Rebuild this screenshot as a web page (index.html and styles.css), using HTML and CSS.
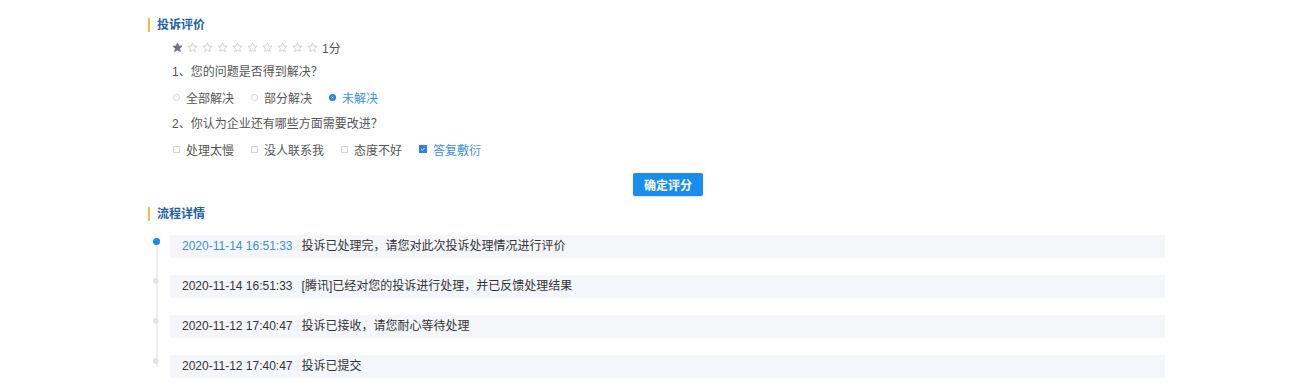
FILE: index.html
```html
<!DOCTYPE html>
<html lang="zh">
<head>
<meta charset="utf-8">
<title>投诉评价</title>
<link rel="stylesheet" href="styles.css">
</head>
<body>
<div class="wrap">
  <div class="sec-title">投诉评价</div>
  <div class="rate">
    <div class="stars">
      <svg class="star on" viewBox="0 0 24 24"><path d="M12 2l2.9 6.6 7.1.6-5.4 4.7 1.6 7-6.2-3.7-6.2 3.7 1.6-7L2 9.2l7.1-.6z"/></svg>
      <svg class="star" viewBox="0 0 24 24"><path d="M12 2l2.9 6.6 7.1.6-5.4 4.7 1.6 7-6.2-3.7-6.2 3.7 1.6-7L2 9.2l7.1-.6z"/></svg>
      <svg class="star" viewBox="0 0 24 24"><path d="M12 2l2.9 6.6 7.1.6-5.4 4.7 1.6 7-6.2-3.7-6.2 3.7 1.6-7L2 9.2l7.1-.6z"/></svg>
      <svg class="star" viewBox="0 0 24 24"><path d="M12 2l2.9 6.6 7.1.6-5.4 4.7 1.6 7-6.2-3.7-6.2 3.7 1.6-7L2 9.2l7.1-.6z"/></svg>
      <svg class="star" viewBox="0 0 24 24"><path d="M12 2l2.9 6.6 7.1.6-5.4 4.7 1.6 7-6.2-3.7-6.2 3.7 1.6-7L2 9.2l7.1-.6z"/></svg>
      <svg class="star" viewBox="0 0 24 24"><path d="M12 2l2.9 6.6 7.1.6-5.4 4.7 1.6 7-6.2-3.7-6.2 3.7 1.6-7L2 9.2l7.1-.6z"/></svg>
      <svg class="star" viewBox="0 0 24 24"><path d="M12 2l2.9 6.6 7.1.6-5.4 4.7 1.6 7-6.2-3.7-6.2 3.7 1.6-7L2 9.2l7.1-.6z"/></svg>
      <svg class="star" viewBox="0 0 24 24"><path d="M12 2l2.9 6.6 7.1.6-5.4 4.7 1.6 7-6.2-3.7-6.2 3.7 1.6-7L2 9.2l7.1-.6z"/></svg>
      <svg class="star" viewBox="0 0 24 24"><path d="M12 2l2.9 6.6 7.1.6-5.4 4.7 1.6 7-6.2-3.7-6.2 3.7 1.6-7L2 9.2l7.1-.6z"/></svg>
      <svg class="star" viewBox="0 0 24 24"><path d="M12 2l2.9 6.6 7.1.6-5.4 4.7 1.6 7-6.2-3.7-6.2 3.7 1.6-7L2 9.2l7.1-.6z"/></svg>
      <span class="score">1分</span>
    </div>
    <div class="q q1">1、您的问题是否得到解决？</div>
    <div class="opts">
      <span class="opt"><i class="radio"></i>全部解决</span>
      <span class="opt"><i class="radio"></i>部分解决</span>
      <span class="opt sel"><i class="radio"></i>未解决</span>
    </div>
    <div class="q q2">2、你认为企业还有哪些方面需要改进？</div>
    <div class="opts">
      <span class="opt"><i class="check"></i>处理太慢</span>
      <span class="opt"><i class="check"></i>没人联系我</span>
      <span class="opt"><i class="check"></i>态度不好</span>
      <span class="opt sel"><i class="check"><svg viewBox="0 0 8 8"><path d="M1.6 4.2l1.6 1.5 3.2-3.4" fill="none" stroke="#fff" stroke-width="1.2"/></svg></i>答复敷衍</span>
    </div>
  </div>
  <div class="btn-row"><button class="btn">确定评分</button></div>
  <div class="sec-title sec2">流程详情</div>
  <ul class="timeline">
    <li class="item first"><span class="date">2020-11-14 16:51:33</span><span class="msg">投诉已处理完，请您对此次投诉处理情况进行评价</span></li>
    <li class="item"><span class="date">2020-11-14 16:51:33</span><span class="msg">[腾讯]已经对您的投诉进行处理，并已反馈处理结果</span></li>
    <li class="item"><span class="date">2020-11-12 17:40:47</span><span class="msg">投诉已接收，请您耐心等待处理</span></li>
    <li class="item"><span class="date">2020-11-12 17:40:47</span><span class="msg">投诉已提交</span></li>
  </ul>
</div>
</body>
</html>
```

FILE: styles.css
```css
* { box-sizing: border-box; }
html, body { margin: 0; padding: 0; background: #fff; }
body {
  font-family: "Liberation Sans", "Noto Sans CJK SC", sans-serif;
  font-size: 12px;
  color: #333;
}
.wrap {
  margin-left: 148px;
  width: 1040px;
  padding-top: 15px;
}
.sec-title {
  height: 20px;
  line-height: 20px;
  font-weight: bold;
  color: #2360a8;
  font-size: 12px;
  padding-left: 9px;
  position: relative;
}
.sec-title::before {
  content: "";
  position: absolute;
  left: 0;
  top: 3px;
  width: 2px;
  height: 14px;
  background: #f3bd3a;
}
.rate { padding-left: 24px; }
.stars {
  margin-top: 2px;
  height: 20px;
  display: flex;
  align-items: center;
}
.star {
  width: 11px;
  height: 11px;
  margin-right: 4px;
  fill: none;
  stroke: #c8c8c8;
  stroke-width: 1.8;
}
.star.on { fill: #6b7280; stroke: #6b7280; }
.score { margin-left: 0; color: #555; }
.q {
  height: 20px;
  line-height: 20px;
  color: #555;
}
.q1 { margin-top: 5px; }
.q2 { margin-top: 7px; }
.opts {
  margin-top: 5px;
  height: 20px;
  display: flex;
  align-items: center;
  gap: 16px;
  color: #555;
}
.opt { display: flex; align-items: center; }
.opt.sel { color: #3a8ee6; }
.radio {
  width: 7px;
  height: 7px;
  border: 1px solid #d4d4d4;
  border-radius: 50%;
  margin: 0 6px 0 1px;
}
.opt.sel .radio {
  border: 2px solid #2a82e4;
  background: #fff;
  box-shadow: inset 0 0 0 1px #2a82e4;
}
.check {
  width: 7px;
  height: 7px;
  border: 1px solid #d4d4d4;
  margin: 0 6px 0 1px;
  display: flex;
}
.check svg { width: 100%; height: 100%; }
.opt.sel .check {
  width: 8px;
  height: 8px;
  border-color: #2a82e4;
  background: #2a82e4;
}
.btn-row {
  margin-top: 14px;
  display: flex;
  justify-content: center;
}
.btn {
  width: 70px;
  height: 23px;
  border: none;
  border-radius: 2px;
  background: #1a8cf0;
  color: #fff;
  font-family: inherit;
  font-size: 12px;
  font-weight: bold;
  padding: 0;
  box-shadow: 0 1px 2px rgba(0,0,0,0.15);
}
.sec2 { margin-top: 8px; }
.timeline {
  list-style: none;
  margin: 11px 0 0;
  padding: 0 23px 0 22px;
  position: relative;
}
.timeline::before {
  content: "";
  position: absolute;
  left: 8px;
  top: 6px;
  width: 2px;
  height: 126px;
  background: #efefef;
}
.item {
  position: relative;
  height: 23px;
  line-height: 23px;
  background: #f5f6f9;
  padding-left: 12px;
  margin-bottom: 17px;
  display: flex;
  gap: 9px;
  color: #333;
}
.item::before {
  content: "";
  position: absolute;
  left: -17px;
  top: 3px;
  width: 6px;
  height: 6px;
  border-radius: 50%;
  background: #e4e4e4;
}
.item.first::before {
  background: #1f87e8;
  left: -17px;
  top: 3px;
  width: 7px;
  height: 7px;
}
.item.first .date { color: #3a8ee6; }
```
